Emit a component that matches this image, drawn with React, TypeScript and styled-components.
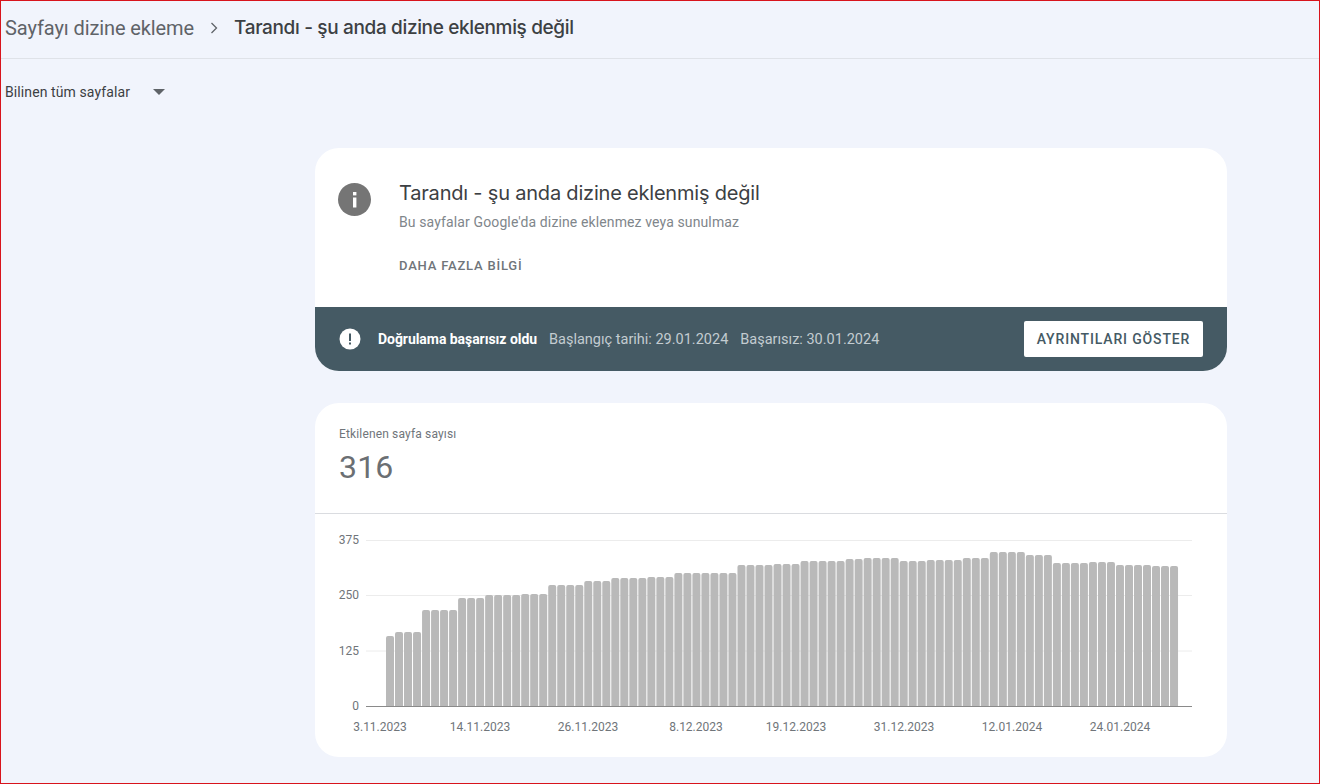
import React from "react";
import styled, { createGlobalStyle } from "styled-components";

const Global = createGlobalStyle`
  html, body { margin: 0; padding: 0; }
  body { font-family: Roboto, "Liberation Sans", sans-serif; background: #f1f4fc; }
`;

const Page = styled.div`
  box-sizing: border-box;
  width: 1320px;
  height: 784px;
  overflow: hidden;
  background: #f1f4fc;
  border: 1px solid #d8141c;
  display: flex;
  flex-direction: column;
`;

const Header = styled.header`
  box-sizing: border-box;
  height: 58px;
  padding: 0 4px 4px;
  border-bottom: 1px solid #dfe2e8;
  display: flex;
  align-items: center;
  font-size: 20px;
  letter-spacing: -0.1px;
`;

const Crumb = styled.span`
  color: #5f6368;
`;

const Current = styled.span`
  color: #3c4043;
  font-weight: 500;
  font-family: Inter, Roboto, sans-serif;
  font-size: 19px;
  letter-spacing: -0.35px;
`;

const Chevron = styled.svg`
  width: 12px;
  height: 14px;
  margin: 0 14px 0 14px;
  fill: none;
  stroke: #5f6368;
  stroke-width: 1.3;
`;

const Filter = styled.div`
  height: 66px;
  padding: 0 4px 0;
  display: flex;
  align-items: center;
  font-size: 14px;
  color: #3c4043;
  letter-spacing: 0.1px;
`;

const Caret = styled.div`
  width: 0;
  height: 0;
  margin-left: 23px;
  border-left: 6px solid transparent;
  border-right: 6px solid transparent;
  border-top: 6px solid #5f6368;
`;

const Column = styled.main`
  width: 912px;
  margin: 23px 0 0 314px;
  display: flex;
  flex-direction: column;
  gap: 32px;
`;

const Card = styled.section`
  background: #fff;
  border-radius: 24px;
  overflow: hidden;
`;

const Intro = styled.div`
  box-sizing: border-box;
  height: 159px;
  padding: 34px 24px 0 23px;
  display: flex;
  align-items: flex-start;
  gap: 28px;
`;

const InfoIcon = styled.svg`
  flex: none;
  width: 33px;
  height: 33px;
  margin-top: 1px;
`;

const IntroText = styled.div`
  display: flex;
  flex-direction: column;
`;

const Title = styled.h1`
  margin: 0;
  font-size: 21px;
  line-height: 22px;
  font-weight: 400;
  font-family: Inter, Roboto, sans-serif;
  font-size: 20px;
  letter-spacing: -0.2px;
  color: #3c4043;
`;

const Subtitle = styled.p`
  margin: 8px 0 0;
  font-size: 14px;
  line-height: 20px;
  color: #80868b;
  letter-spacing: 0.12px;
`;

const LearnMore = styled.a`
  margin-top: 24px;
  font-size: 13px;
  line-height: 20px;
  font-weight: 500;
  letter-spacing: 0.8px;
  color: #70757a;
`;

const Banner = styled.div`
  box-sizing: border-box;
  height: 64px;
  padding: 0 24px;
  background: #455a64;
  display: flex;
  align-items: center;
`;

const AlertIcon = styled.svg`
  flex: none;
  width: 22px;
  height: 22px;
  margin-right: 17px;
`;

const Strong = styled.span`
  color: #fff;
  font-size: 14px;
  font-weight: 700;
  letter-spacing: -0.05px;
  margin-right: 12px;
`;

const Detail = styled.span`
  color: #c3ccd1;
  font-size: 14.5px;
  margin-right: 12px;
`;

const ActionButton = styled.button`
  margin-left: auto;
  box-sizing: border-box;
  width: 179px;
  height: 36px;
  padding: 0;
  border: 0;
  border-radius: 2px;
  background: #fff;
  color: #455a64;
  font-family: Roboto, sans-serif;
  font-size: 14px;
  font-weight: 500;
  letter-spacing: 0.85px;
`;

const Summary = styled.div`
  box-sizing: border-box;
  height: 111px;
  padding: 23px 24px 0;
  border-bottom: 1px solid #dadce0;
`;

const MetricLabel = styled.div`
  font-size: 12px;
  line-height: 16px;
  color: #70757a;
  letter-spacing: 0.15px;
`;

const MetricValue = styled.div`
  margin-top: 7px;
  font-size: 32px;
  line-height: 36px;
  color: #6b6f73;
  letter-spacing: 0.2px;
`;

const ChartBox = styled.div`
  height: 243px;
`;

const ChartSvg = styled.svg`
  display: block;
  width: 912px;
  height: 243px;
  font-family: Roboto, sans-serif;
  font-size: 12px;
  fill: #70757a;
`;

const runs: [number, number][] = [
  [1, 318], [3, 306], [4, 240], [3, 204], [4, 195], [3, 192], [4, 165], [3, 153],
  [4, 144], [3, 141], [7, 129], [4, 105], [3, 102], [5, 93], [2, 87], [4, 84],
  [3, 93], [4, 90], [3, 84], [4, 66], [3, 75], [4, 99], [3, 96], [4, 105], [3, 108],
];
const tops = runs.flatMap(([n, t]) => Array.from({ length: n }, () => t));

const baseY = 192;
const ox = 314;
const oy = 514;

const bars = tops.map((t, i) => {
  const x = 385 + i * 9.012 - ox;
  const y = 530 + t / 3 - oy;
  const w = 8;
  return `M${x.toFixed(2)} ${baseY}V${(y + 2).toFixed(2)}q0-2 2-2h${w - 4}q2 0 2 2V${baseY}z`;
});

const yTicks = [
  { label: "375", y: 26 },
  { label: "250", y: 81 },
  { label: "125", y: 136.5 },
  { label: "0", y: 192 },
];

const xTicks = [
  { label: "3.11.2023", x: 66 },
  { label: "14.11.2023", x: 166 },
  { label: "26.11.2023", x: 274 },
  { label: "8.12.2023", x: 382 },
  { label: "19.12.2023", x: 482 },
  { label: "31.12.2023", x: 590 },
  { label: "12.01.2024", x: 698 },
  { label: "24.01.2024", x: 806 },
];

export default function App() {
  return (
    <>
      <Global />
      <Page>
        <Header>
          <Crumb>Sayfayı dizine ekleme</Crumb>
          <Chevron viewBox="0 0 12 14">
            <path d="M3.5 2l5 5-5 5" />
          </Chevron>
          <Current>Tarandı - şu anda dizine eklenmiş değil</Current>
        </Header>
        <Filter>
          Bilinen tüm sayfalar
          <Caret />
        </Filter>
        <Column>
          <Card>
            <Intro>
              <InfoIcon viewBox="0 0 33 33">
                <circle cx="16.5" cy="16.5" r="16.5" fill="#757575" />
                <rect x="15" y="14.5" width="3.4" height="10" fill="#fff" />
                <rect x="15" y="9" width="3.4" height="3.4" fill="#fff" />
              </InfoIcon>
              <IntroText>
                <Title>Tarandı - şu anda dizine eklenmiş değil</Title>
                <Subtitle>Bu sayfalar Google'da dizine eklenmez veya sunulmaz</Subtitle>
                <LearnMore>DAHA FAZLA BİLGİ</LearnMore>
              </IntroText>
            </Intro>
            <Banner>
              <AlertIcon viewBox="0 0 22 22">
                <circle cx="11" cy="11" r="10.5" fill="#fff" />
                <rect x="10" y="5.5" width="2" height="7.5" fill="#455a64" />
                <rect x="10" y="14.5" width="2" height="2" fill="#455a64" />
              </AlertIcon>
              <Strong>Doğrulama başarısız oldu</Strong>
              <Detail>Başlangıç tarihi: 29.01.2024</Detail>
              <Detail>Başarısız: 30.01.2024</Detail>
              <ActionButton>AYRINTILARI GÖSTER</ActionButton>
            </Banner>
          </Card>
          <Card>
            <Summary>
              <MetricLabel>Etkilenen sayfa sayısı</MetricLabel>
              <MetricValue>316</MetricValue>
            </Summary>
            <ChartBox>
              <ChartSvg viewBox="0 0 912 243">
                {yTicks.slice(0, 3).map((t) => (
                  <line key={t.label} x1="51" x2="877" y1={t.y + 0.5} y2={t.y + 0.5} stroke="#ececec" />
                ))}
                <path d={bars.join("")} fill="#b9b9b9" />
                <line x1="51" x2="877" y1="192.5" y2="192.5" stroke="#8a8a8a" />
                {yTicks.map((t) => (
                  <text key={t.label} x="44" y={t.y + 4} textAnchor="end">
                    {t.label}
                  </text>
                ))}
                {xTicks.map((t) => (
                  <text key={t.label} x={t.x - 1} y="217" textAnchor="middle">
                    {t.label}
                  </text>
                ))}
              </ChartSvg>
            </ChartBox>
          </Card>
        </Column>
      </Page>
    </>
  );
}
